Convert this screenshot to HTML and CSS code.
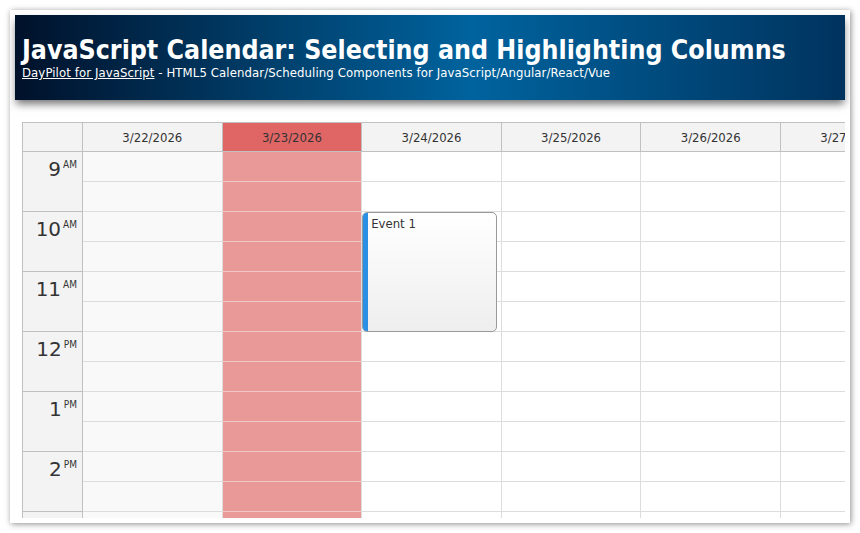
FILE: index.html
```html
<!DOCTYPE html>
<html>
<head>
<meta charset="utf-8">
<title>JavaScript Calendar: Selecting and Highlighting Columns</title>
<link rel="stylesheet" href="styles.css">
</head>
<body>
<div class="page">
  <div class="header">
    <h1 class="title">JavaScript Calendar: Selecting and Highlighting Columns</h1>
    <div class="subtitle"><a class="link" href="#">DayPilot for JavaScript</a> - HTML5 Calendar/Scheduling Components for JavaScript/Angular/React/Vue</div>
  </div>
  <div class="main">
    <div class="calendar">
      <div class="cal-head">
        <div class="corner"></div>
        <div class="colh">3/22/2026</div>
        <div class="colh selected">3/23/2026</div>
        <div class="colh">3/24/2026</div>
        <div class="colh">3/25/2026</div>
        <div class="colh">3/26/2026</div>
        <div class="colh">3/27/2026</div>
      </div>
      <div class="cal-body">
        <div class="times">
          <div class="hour"><span class="hnum">9</span><span class="ampm">AM</span></div>
          <div class="hour"><span class="hnum">10</span><span class="ampm">AM</span></div>
          <div class="hour"><span class="hnum">11</span><span class="ampm">AM</span></div>
          <div class="hour"><span class="hnum">12</span><span class="ampm">PM</span></div>
          <div class="hour"><span class="hnum">1</span><span class="ampm">PM</span></div>
          <div class="hour"><span class="hnum">2</span><span class="ampm">PM</span></div>
          <div class="hour"></div>
        </div>
        <div class="day off">
          <div class="cell"></div><div class="cell"></div><div class="cell"></div><div class="cell"></div>
          <div class="cell"></div><div class="cell"></div><div class="cell"></div><div class="cell"></div>
          <div class="cell"></div><div class="cell"></div><div class="cell"></div><div class="cell"></div>
          <div class="cell"></div><div class="cell"></div>
        </div>
        <div class="day selected">
          <div class="cell"></div><div class="cell"></div><div class="cell"></div><div class="cell"></div>
          <div class="cell"></div><div class="cell"></div><div class="cell"></div><div class="cell"></div>
          <div class="cell"></div><div class="cell"></div><div class="cell"></div><div class="cell"></div>
          <div class="cell"></div><div class="cell"></div>
        </div>
        <div class="day">
          <div class="cell"></div><div class="cell"></div><div class="cell"></div><div class="cell"></div>
          <div class="cell"></div><div class="cell"></div><div class="cell"></div><div class="cell"></div>
          <div class="cell"></div><div class="cell"></div><div class="cell"></div><div class="cell"></div>
          <div class="cell"></div><div class="cell"></div>
          <div class="event"><div class="event-bar"></div><div class="event-text">Event 1</div></div>
        </div>
        <div class="day">
          <div class="cell"></div><div class="cell"></div><div class="cell"></div><div class="cell"></div>
          <div class="cell"></div><div class="cell"></div><div class="cell"></div><div class="cell"></div>
          <div class="cell"></div><div class="cell"></div><div class="cell"></div><div class="cell"></div>
          <div class="cell"></div><div class="cell"></div>
        </div>
        <div class="day">
          <div class="cell"></div><div class="cell"></div><div class="cell"></div><div class="cell"></div>
          <div class="cell"></div><div class="cell"></div><div class="cell"></div><div class="cell"></div>
          <div class="cell"></div><div class="cell"></div><div class="cell"></div><div class="cell"></div>
          <div class="cell"></div><div class="cell"></div>
        </div>
        <div class="day">
          <div class="cell"></div><div class="cell"></div><div class="cell"></div><div class="cell"></div>
          <div class="cell"></div><div class="cell"></div><div class="cell"></div><div class="cell"></div>
          <div class="cell"></div><div class="cell"></div><div class="cell"></div><div class="cell"></div>
          <div class="cell"></div><div class="cell"></div>
        </div>
      </div>
    </div>
  </div>
</div>
</body>
</html>
```

FILE: styles.css
```css
html, body {
  margin: 0;
  padding: 0;
  background: #ffffff;
}

body {
  font-family: "DejaVu Sans Condensed", "DejaVu Sans", sans-serif;
  color: #333333;
}

.page {
  margin: 10px;
  width: 830px;
  height: 503px;
  padding: 5px;
  background: #ffffff;
  box-shadow: 1px 1px 6px rgba(0, 0, 0, 0.45);
  overflow: hidden;
}

.header {
  height: 85px;
  box-sizing: border-box;
  padding: 20px 7px 0 7px;
  background: linear-gradient(to right, #00112a 0%, #00639e 55%, #00335e 100%);
  box-shadow: 0 5px 8px -1px rgba(0, 0, 0, 0.55);
  color: #ffffff;
  position: relative;
  z-index: 1;
}

.title {
  margin: 0;
  font-family: "DejaVu Sans Condensed", "DejaVu Sans", sans-serif;
  font-stretch: condensed;
  font-weight: bold;
  font-size: 26.5px;
  line-height: 29px;
  letter-spacing: 0;
  color: #ffffff;
}

.subtitle {
  margin-top: 1px;
  font-family: "DejaVu Sans Condensed", "DejaVu Sans", sans-serif;
  font-stretch: condensed;
  font-size: 13px;
  line-height: 16px;
  letter-spacing: 0.1px;
  color: #ffffff;
}

.link {
  color: #ffffff;
  text-decoration: underline;
}

.main {
  padding: 22px 0 0 7px;
  height: 418px;
  box-sizing: border-box;
  overflow: hidden;
}

.calendar {
  width: 899px;
  border-top: 1px solid #c0c0c0;
  border-left: 1px solid #c0c0c0;
  font-size: 13px;
}

.cal-head,
.cal-body {
  display: grid;
  grid-template-columns: 60px repeat(6, 139.6px);
}

.corner,
.colh {
  height: 29px;
  box-sizing: border-box;
  background: #f3f3f3;
  border-right: 1px solid #c0c0c0;
  border-bottom: 1px solid #c0c0c0;
}

.colh {
  display: flex;
  align-items: center;
  justify-content: center;
  color: #333333;
  font-size: 13px;
  white-space: nowrap;
}

.colh.selected {
  background: #e06666;
}

.times {
  background: #f3f3f3;
  border-right: 1px solid #c0c0c0;
}

.hour {
  height: 60px;
  box-sizing: border-box;
  border-bottom: 1px solid #c0c0c0;
  display: flex;
  justify-content: flex-end;
  align-items: flex-start;
  padding: 5px 5px 0 0;
  color: #333333;
}

.hnum {
  font-family: "DejaVu Sans", sans-serif;
  font-size: 20px;
  line-height: 24px;
}

.ampm {
  font-size: 10px;
  line-height: 12px;
  margin-left: 2px;
  padding-top: 2px;
}

.day {
  position: relative;
  background: #ffffff;
  border-right: 1px solid #dddddd;
}

.day.off {
  background: #f9f9f9;
}

.day.selected {
  background: #ea9999;
}

.cell {
  height: 30px;
  box-sizing: border-box;
  border-bottom: 1px solid #dddddd;
}

.day.selected .cell {
  border-bottom-color: #f2c6c6;
}

.event {
  position: absolute;
  top: 60px;
  left: 0;
  right: 4px;
  height: 120px;
  box-sizing: border-box;
  border: 1px solid #999999;
  border-radius: 5px;
  background: linear-gradient(to bottom, #ffffff 0%, #eeeeee 100%);
  overflow: hidden;
  display: flex;
}

.event-bar {
  width: 5px;
  flex: none;
  background: #2b8fe3;
}

.event-text {
  padding: 3px 0 0 3px;
  font-size: 13px;
  line-height: 15px;
  color: #333333;
}
```
